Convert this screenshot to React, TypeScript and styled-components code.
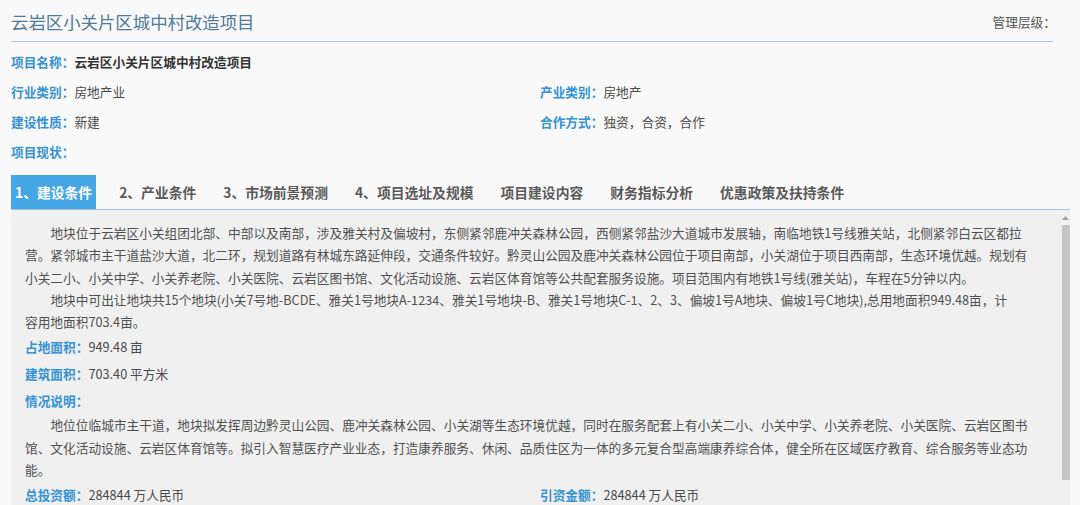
import React from 'react'
import styled, { createGlobalStyle } from 'styled-components'

const GlobalStyle = createGlobalStyle`
  html, body {
    margin: 0;
    padding: 0;
    overflow: hidden;
    background: #f9f9f9;
    font-family: "Noto Sans CJK SC", "Noto Sans", sans-serif;
  }
`

const Page = styled.div`
  box-sizing: border-box;
  width: 1080px;
  height: 505px;
  padding: 0 10px 0 11px;
  overflow: hidden;
`

const Header = styled.div`
  display: flex;
  align-items: center;
  justify-content: space-between;
  height: 41px;
  margin-right: 17px;
  border-bottom: 1px solid #a9c8dc;
`

const Title = styled.h1`
  margin: 1px 0 0;
  font-size: 17.4px;
  font-weight: normal;
  color: #4f7a99;
`

const Level = styled.span`
  font-size: 12.7px;
  color: #555;
  margin: 1px -3px 0 0;
`

const InfoGrid = styled.div`
  display: grid;
  grid-template-columns: 529px 1fr;
  grid-auto-rows: 30px;
  margin: 4px 17px 0 0;
`

const Field = styled.div<{ $wide?: boolean; $h?: number }>`
  display: flex;
  align-items: center;
  font-size: 12.7px;
  color: #4a4a4a;
  grid-column: ${p => (p.$wide ? '1 / -1' : 'auto')};
  ${p => (p.$h ? `height: ${p.$h}px;` : '')}
`

const Label = styled.span`
  color: #3592d3;
  font-weight: bold;
`

const Value = styled.span<{ $bold?: boolean }>`
  color: ${p => (p.$bold ? '#333' : '#4a4a4a')};
  font-weight: ${p => (p.$bold ? 'bold' : 'normal')};
`

const Tabs = styled.div`
  display: flex;
  gap: 19px;
  height: 34px;
  margin-top: 9px;
  border-bottom: 1px solid #a9c0db;
`

const Tab = styled.div<{ $active?: boolean }>`
  padding: 0 4px;
  line-height: 34px;
  font-size: 13.8px;
  font-weight: bold;
  color: ${p => (p.$active ? '#fff' : '#5a5a5a')};
  background: ${p => (p.$active ? '#45a7e6' : 'transparent')};
`

const Panel = styled.div`
  display: flex;
  height: 295px;
  background: #f0f0f0;
  overflow: hidden;
`

const Body = styled.div`
  flex: 0 0 1007px;
  padding: 12px 0 0 14px;
  font-size: 12.7px;
  color: #505050;
`

const Para = styled.p`
  margin: 0;
  line-height: 22.3px;
  text-indent: 2em;
`

const Pair = styled.div`
  display: grid;
  grid-template-columns: 515px 1fr;
`

const ScrollBar = styled.div`
  margin-left: auto;
  width: 9px;
  display: flex;
  flex-direction: column;
  align-items: center;
`

const Arrow = styled.div`
  height: 15px;
  display: flex;
  align-items: center;
  justify-content: center;
`

const Thumb = styled.div`
  align-self: flex-end;
  width: 8px;
  height: 255px;
  background: #c6c6c6;
`

const tabs = ['1、建设条件', '2、产业条件', '3、市场前景预测', '4、项目选址及规模', '项目建设内容', '财务指标分析', '优惠政策及扶持条件']

const App: React.FC = () => {
  return (
    <Page>
      <GlobalStyle />
      <Header>
        <Title>云岩区小关片区城中村改造项目</Title>
        <Level>管理层级：</Level>
      </Header>
      <InfoGrid>
        <Field $wide>
          <Label>项目名称：</Label>
          <Value $bold>云岩区小关片区城中村改造项目</Value>
        </Field>
        <Field>
          <Label>行业类别：</Label>
          <Value>房地产业</Value>
        </Field>
        <Field>
          <Label>产业类别：</Label>
          <Value>房地产</Value>
        </Field>
        <Field>
          <Label>建设性质：</Label>
          <Value>新建</Value>
        </Field>
        <Field>
          <Label>合作方式：</Label>
          <Value>独资，合资，合作</Value>
        </Field>
        <Field $wide>
          <Label>项目现状：</Label>
        </Field>
      </InfoGrid>
      <Tabs>
        {tabs.map((t, i) => (
          <Tab key={t} $active={i === 0}>{t}</Tab>
        ))}
      </Tabs>
      <Panel>
        <Body>
          <Para>
            地块位于云岩区小关组团北部、中部以及南部，涉及雅关村及偏坡村，东侧紧邻鹿冲关森林公园，西侧紧邻盐沙大道城市发展轴，南临地铁1号线雅关站，北侧紧邻白云区都拉营。紧邻城市主干道盐沙大道，北二环，规划道路有林城东路延伸段，交通条件较好。黔灵山公园及鹿冲关森林公园位于项目南部，小关湖位于项目西南部，生态环境优越。规划有小关二小、小关中学、小关养老院、小关医院、云岩区图书馆、文化活动设施、云岩区体育馆等公共配套服务设施。项目范围内有地铁1号线(雅关站)，车程在5分钟以内。
          </Para>
          <Para>
            地块中可出让地块共15个地块(小关7号地-BCDE、雅关1号地块A-1234、雅关1号地块-B、雅关1号地块C-1、2、3、偏坡1号A地块、偏坡1号C地块),总用地面积949.48亩，计<br />容用地面积703.4亩。
          </Para>
          <Field $h={27}>
            <Label>占地面积：</Label>
            <Value>949.48 亩</Value>
          </Field>
          <Field $h={27}>
            <Label>建筑面积：</Label>
            <Value>703.40 平方米</Value>
          </Field>
          <Field $h={27}>
            <Label>情况说明：</Label>
          </Field>
          <Para>
            地位位临城市主干道，地块拟发挥周边黔灵山公园、鹿冲关森林公园、小关湖等生态环境优越，同时在服务配套上有小关二小、小关中学、小关养老院、小关医院、云岩区图书馆、文化活动设施、云岩区体育馆等。拟引入智慧医疗产业业态，打造康养服务、休闲、品质住区为一体的多元复合型高端康养综合体，健全所在区域医疗教育、综合服务等业态功能。
          </Para>
          <Pair>
            <Field $h={27}>
              <Label>总投资额：</Label>
              <Value>284844 万人民币</Value>
            </Field>
            <Field $h={27}>
              <Label>引资金额：</Label>
              <Value>284844 万人民币</Value>
            </Field>
          </Pair>
        </Body>
        <ScrollBar>
          <Arrow>
            <svg width="7" height="4" viewBox="0 0 7 4">
              <path d="M0 4 L3.5 0 L7 4 Z" fill="#a3a3a3" />
            </svg>
          </Arrow>
          <Thumb />
        </ScrollBar>
      </Panel>
    </Page>
  )
}

export default App
